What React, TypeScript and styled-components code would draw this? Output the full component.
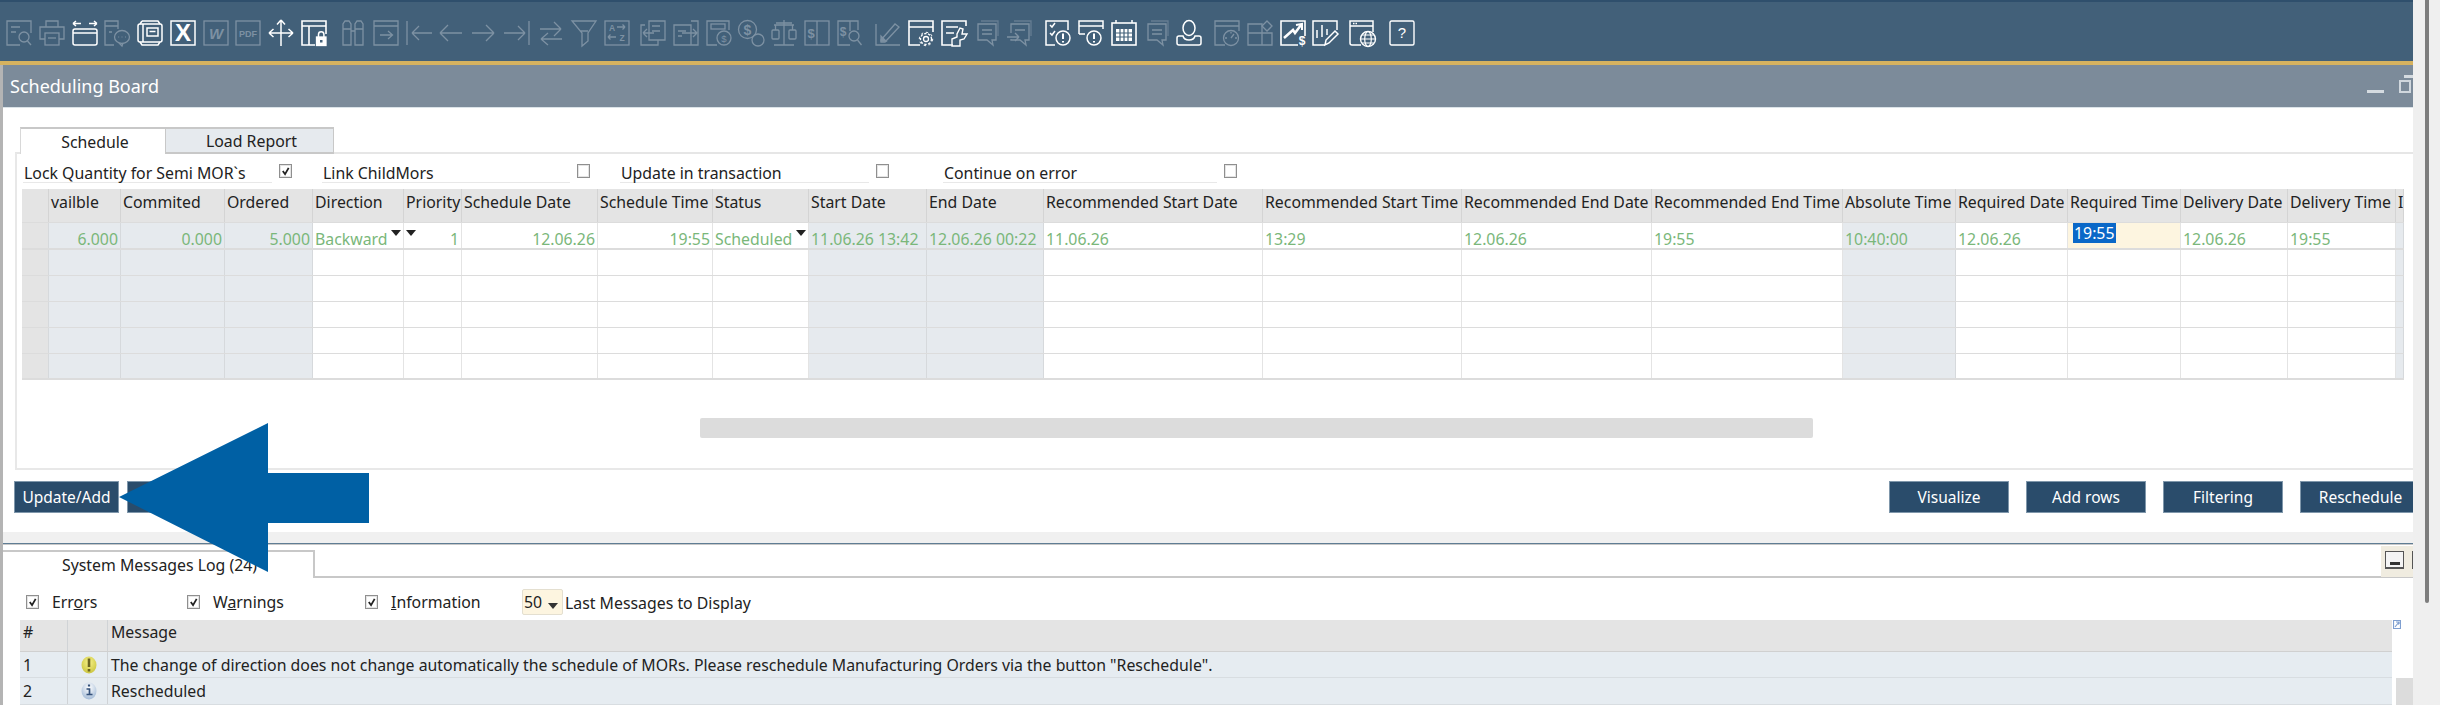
import React from "react";
import styled, { createGlobalStyle } from "styled-components";

const FONT = `"Noto Sans", "Liberation Sans", sans-serif`;

const GlobalStyle = createGlobalStyle`
  html, body {
    margin: 0;
    padding: 0;
    background: #fff;
  }
  * {
    box-sizing: border-box;
  }
`;

type Column = {
  name: string;
  width: number;
  right?: boolean;
  readOnly?: boolean;
  value?: string;
  caret?: "left" | "right";
  selected?: boolean;
};

const COLUMNS: Column[] = [
  { name: "", width: 27 },
  { name: "vailble", width: 72, right: true, readOnly: true, value: "6.000" },
  { name: "Commited", width: 104, right: true, readOnly: true, value: "0.000" },
  { name: "Ordered", width: 88, right: true, readOnly: true, value: "5.000" },
  { name: "Direction", width: 91, value: "Backward", caret: "right" },
  { name: "Priority", width: 58, right: true, value: "1", caret: "left" },
  { name: "Schedule Date", width: 136, right: true, value: "12.06.26" },
  { name: "Schedule Time", width: 115, right: true, value: "19:55" },
  { name: "Status", width: 96, value: "Scheduled", caret: "right" },
  { name: "Start Date", width: 118, readOnly: true, value: "11.06.26 13:42" },
  { name: "End Date", width: 117, readOnly: true, value: "12.06.26 00:22" },
  { name: "Recommended Start Date", width: 219, value: "11.06.26" },
  { name: "Recommended Start Time", width: 199, value: "13:29" },
  { name: "Recommended End Date", width: 190, value: "12.06.26" },
  { name: "Recommended End Time", width: 191, value: "19:55" },
  { name: "Absolute Time", width: 113, readOnly: true, value: "10:40:00" },
  { name: "Required Date", width: 112, value: "12.06.26" },
  { name: "Required Time", width: 113, value: "19:55", selected: true },
  { name: "Delivery Date", width: 107, value: "12.06.26" },
  { name: "Delivery Time", width: 108, value: "19:55" },
  { name: "I", width: 8, readOnly: true },
];

const TEMPLATE = COLUMNS.map((c) => `${c.width}px`).join(" ");

const Page = styled.div`
  display: flex;
  width: 2440px;
  height: 705px;
  overflow: hidden;
  font-family: ${FONT};
  font-size: 15.85px;
  color: #222;
`;

const Main = styled.div`
  width: 2413px;
  height: 705px;
  display: flex;
  flex-direction: column;
  overflow: hidden;
`;

const Rail = styled.div`
  width: 27px;
  height: 705px;
  background: #efefef;
  padding-left: 12px;
`;

const RailThumb = styled.div`
  width: 4px;
  height: 603px;
  background: #7d7d7d;
  border-radius: 0 0 2px 2px;
`;

const Toolbar = styled.div`
  height: 65px;
  flex-shrink: 0;
  background: #426079;
  border-top: 2px solid #2f4f6c;
  border-bottom: 4px solid #d6b25f;
  padding: 18px 0 0 6px;
  display: flex;
`;

const ToolGroup = styled.div<{ $gap?: number }>`
  display: flex;
  gap: 6.75px;
  margin-left: ${(p) => p.$gap ?? 0}px;
`;

const Tool = styled.svg<{ $on?: boolean }>`
  width: 26px;
  height: 26px;
  flex-shrink: 0;
  fill: none;
  stroke: ${(p) => (p.$on ? "#ffffff" : "#7d91a3")};
  stroke-width: 1.3;
  color: ${(p) => (p.$on ? "#ffffff" : "#7d91a3")};
  overflow: visible;
  text {
    stroke: none;
    fill: currentColor;
    font-family: "Liberation Sans", sans-serif;
    text-anchor: middle;
  }
`;

const Workspace = styled.div`
  flex: 1;
  border-left: 3px solid #b4b4b4;
  display: flex;
  flex-direction: column;
  min-height: 0;
`;

const TitleBar = styled.div`
  height: 43px;
  flex-shrink: 0;
  background: #7c8b9a;
  border-bottom: 1px solid #dbe3e8;
  color: #fff;
  font-size: 18px;
  padding-left: 7px;
  display: flex;
  align-items: center;
  justify-content: space-between;
`;

const WindowButtons = styled.div`
  display: flex;
  align-items: flex-start;
  gap: 15px;
  align-self: flex-start;
  padding-top: 10px;
`;

const MinimizeGlyph = styled.span`
  display: block;
  width: 17px;
  height: 3px;
  margin-top: 15px;
  background: #d5dbe0;
`;

const RestoreGlyph = styled.span`
  display: block;
  position: relative;
  width: 12px;
  height: 13px;
  margin-top: 5px;
  margin-right: 2px;
  border: 2px solid #d0d7dd;
  &::after {
    content: "";
    position: absolute;
    left: 3px;
    top: -7px;
    width: 9px;
    height: 3px;
    background: #d5dbe0;
  }
`;

const Board = styled.section`
  padding: 19px 0 0 12px;
  flex-shrink: 0;
`;

const TabRow = styled.div`
  display: flex;
  height: 27px;
  padding-left: 5px;
  border-bottom: 2px solid #e6e6e6;
`;

const Tab = styled.div<{ $active?: boolean; $w: number }>`
  width: ${(p) => p.$w}px;
  height: 27px;
  padding-left: 4px;
  display: flex;
  align-items: center;
  justify-content: center;
  background: ${(p) => (p.$active ? "#fff" : "#e6eaee")};
  border-top: 2px solid #c8c8c8;
  border-left: ${(p) => (p.$active ? "1px solid #d8d8d8" : "none")};
  border-right: 1px solid #c8c8c8;
  border-bottom: ${(p) => (p.$active ? "none" : "2px solid #c8c8c8")};
`;

const TabPanel = styled.div`
  height: 317px;
  border-left: 2px solid #e8e8e8;
  border-bottom: 2px solid #e8e8e8;
  margin-top: -1px;
  padding-top: 11px;
`;

const Options = styled.div`
  display: flex;
  height: 25px;
  padding-left: 6px;
`;

const OptionWrap = styled.div<{ $gap?: number }>`
  display: flex;
  gap: 7px;
  margin-left: ${(p) => p.$gap ?? 0}px;
`;

const OptionLabel = styled.label<{ $w: number }>`
  width: ${(p) => p.$w}px;
  height: 19px;
  padding-left: 1px;
  line-height: 18px;
  border-bottom: 1px solid #e8e8e8;
`;

const Box = styled.span`
  width: 13px;
  height: 14px;
  flex-shrink: 0;
  border: 1px solid #8f8f8f;
  box-shadow: inset 0 0 0 1px #e4e4e4;
  background: #fff;
  display: flex;
  align-items: center;
  justify-content: center;
  svg {
    width: 9px;
    height: 9px;
    fill: none;
    stroke: #222;
    stroke-width: 2;
  }
`;

const Grid = styled.div`
  margin: 0 0 0 5px;
  width: 2382px;
`;

const GridRow = styled.div<{ $h: number; $heavy?: boolean }>`
  display: grid;
  grid-template-columns: ${TEMPLATE};
  height: ${(p) => p.$h}px;
  border-bottom: ${(p) => (p.$heavy ? 2 : 1)}px solid #dcdcdc;
`;

const HeadCell = styled.div`
  background: #e4e4e4;
  border-right: 1px solid #d4d4d4;
  padding: 0 0 0 2px;
  line-height: 26px;
  white-space: nowrap;
  overflow: hidden;
`;

const Cell = styled.div<{ $readOnly?: boolean; $rowHead?: boolean; $align?: string; $focus?: boolean }>`
  background: ${(p) =>
    p.$rowHead ? "#e4e4e4" : p.$focus ? "#fdf5e0" : p.$readOnly ? "#e6eaee" : "#fff"};
  border-right: 1px solid ${(p) => (p.$readOnly || p.$rowHead ? "#d6d9dc" : "#e4e4e4")};
  color: #7ab77a;
  padding: 0 2px;
  display: flex;
  align-items: center;
  justify-content: ${(p) => p.$align ?? "flex-start"};
  white-space: nowrap;
`;

const CellText = styled.span`
  line-height: 18px;
  padding-top: 7px;
`;

const Selected = styled.span`
  background: #0a68c8;
  color: #fff;
  height: 20px;
  line-height: 20px;
  margin: 0 0 5px 3px;
  padding: 0 1px;
`;

const Caret = styled.span`
  width: 0;
  height: 0;
  flex-shrink: 0;
  margin-bottom: 6px;
  border-left: 5px solid transparent;
  border-right: 5px solid transparent;
  border-top: 6px solid #222;
`;

const ScrollTrack = styled.div`
  height: 20px;
  margin: 38px 0 0 683px;
  width: 1113px;
  background: #dcdcdc;
  border-radius: 2px;
`;

const Actions = styled.div`
  display: flex;
  justify-content: space-between;
  padding: 11px 0 0 11px;
  height: 62px;
  flex-shrink: 0;
`;

const ActionGroup = styled.div<{ $gap: number; $overhang?: number }>`
  display: flex;
  gap: ${(p) => p.$gap}px;
  margin-right: ${(p) => -(p.$overhang ?? 0)}px;
`;

const ActionButton = styled.button<{ $w: number }>`
  width: ${(p) => p.$w}px;
  height: 32px;
  flex-shrink: 0;
  border: 1px solid #7f97ab;
  background: #2a4c6b;
  color: #fff;
  font: inherit;
  font-size: 15.5px;
  padding: 0;
`;

const Splitter = styled.div`
  height: 12px;
  flex-shrink: 0;
  background: #f0f0f0;
  border-bottom: 1px solid #5f7d94;
  box-shadow: 0 1px 0 #c8c8c8;
`;

const LogBar = styled.div`
  height: 34px;
  flex-shrink: 0;
  display: flex;
  align-items: flex-end;
  justify-content: space-between;
  border-bottom: 2px solid #c8c8c8;
`;

const LogTab = styled.div`
  width: 312px;
  height: 28px;
  margin-bottom: -2px;
  background: #fff;
  border-top: 2px solid #c8c8c8;
  border-right: 2px solid #c8c8c8;
  padding-left: 59px;
  line-height: 26px;
  white-space: nowrap;
`;

const LogControls = styled.div`
  width: 32px;
  height: 31px;
  margin-bottom: -1px;
  background: #f0ece0;
  display: flex;
  padding: 5px 0 0 4px;
  gap: 8px;
  overflow: hidden;
`;

const LogGlyph = styled.span`
  width: 19px;
  height: 18px;
  flex-shrink: 0;
  border: 1px solid #555;
  border-bottom-width: 2px;
  background: #f4f4f4;
  display: flex;
  align-items: flex-end;
  justify-content: center;
  padding-bottom: 2px;
  &::after {
    content: "";
    width: 10px;
    height: 3px;
    background: #333;
  }
`;

const LogOptions = styled.div`
  height: 42px;
  flex-shrink: 0;
  padding: 6px 0 0 23px;
  display: flex;
  align-items: center;
`;

const LogCheck = styled.div<{ $w: number }>`
  width: ${(p) => p.$w}px;
  display: flex;
  align-items: center;
  gap: 13px;
`;

const Mnemonic = styled.span`
  text-decoration: underline;
`;

const Dropdown = styled.div`
  width: 41px;
  height: 26px;
  margin-left: -3px;
  background: #fdf5e0;
  border: 1px solid #e4dfd0;
  border-radius: 2px;
  padding-left: 1px;
  display: flex;
  align-items: center;
  gap: 6px;
`;

const DropCaret = styled.span`
  width: 0;
  height: 0;
  margin-top: 8px;
  border-left: 5px solid transparent;
  border-right: 5px solid transparent;
  border-top: 6px solid #333;
`;

const DropHint = styled.span`
  margin-left: 2px;
  padding-top: 2px;
`;

const LogGridWrap = styled.div`
  display: flex;
  padding-left: 17px;
`;

const LogGrid = styled.div`
  width: 2372px;
  flex-shrink: 0;
`;

const LogRow = styled.div<{ $head?: boolean; $h: number }>`
  display: grid;
  grid-template-columns: 48px 40px 1fr;
  height: ${(p) => p.$h}px;
  background: ${(p) => (p.$head ? "#e4e4e4" : "#e6ecf1")};
  border-bottom: 1px solid ${(p) => (p.$head ? "#d0d0d0" : "#d8dde1")};
`;

const LogCell = styled.div<{ $head?: boolean; $center?: boolean }>`
  border-right: 1px solid #d0d3d6;
  padding-left: 3px;
  display: flex;
  align-items: ${(p) => (p.$head ? "flex-start" : "center")};
  justify-content: ${(p) => (p.$center ? "center" : "flex-start")};
  line-height: 24px;
  white-space: nowrap;
  &:last-child {
    border-right: none;
  }
`;

const LogSide = styled.div`
  width: 21px;
  flex-shrink: 0;
  padding-left: 1px;
`;

const ExpandGlyph = styled.svg`
  display: block;
  width: 8px;
  height: 9px;
  fill: none;
  stroke: #7f9fd0;
  stroke-width: 1.2;
`;

const LogScroll = styled.div`
  width: 17px;
  height: 27px;
  margin: 49px 0 0 3px;
  background: #dcdcdc;
`;

const StatusIcon = styled.svg`
  width: 16px;
  height: 18px;
`;

const PointerArrow = styled.svg`
  position: absolute;
  left: 119px;
  top: 423px;
  width: 250px;
  height: 149px;
`;

const Stage = styled.div`
  position: relative;
  width: 2440px;
  height: 705px;
`;

const Check = () => (
  <svg viewBox="0 0 10 10">
    <path d="M2 4.5 4.5 8 8.5 1" />
  </svg>
);

const T = ({ on, children }: { on?: boolean; children: React.ReactNode }) => (
  <Tool $on={on} viewBox="0 0 26 26">
    {children}
  </Tool>
);

const Chat = () => (
  <>
    <path d="M8 1h17v15" opacity=".6" />
    <path d="M5 4h18v16h-4l1 5-6-5H5z" />
    <path d="M9 10h10M9 14h10" />
  </>
);

const Toolbox = () => (
  <Toolbar>
    <ToolGroup>
      <T>
        <path d="M14 25H1V1h24v12M5 7h9M5 12h5" />
        <circle cx="18" cy="17" r="5" />
        <path d="m21.5 21 3.5 4" />
      </T>
      <T>
        <path d="M7 7V1h12v6M6 19H1V7h24v12h-5" />
        <rect x="6" y="13" width="14" height="12" />
        <path d="M9 18h8" />
      </T>
      <T on>
        <path d="M1 3.5h8M1 3.5l3-2.5M1 3.5 4 6M17 3.5h8M25 3.5 22 1M25 3.5 22 6" strokeWidth="1.5" />
        <rect x="1" y="9" width="24" height="16" rx="2" strokeWidth="1.5" />
        <path d="M1 13h24" strokeWidth="1.5" />
      </T>
      <T>
        <path d="M10 25H1V1h13v8M1 6h13M5 12h3" />
        <ellipse cx="18" cy="17" rx="7.5" ry="6.5" />
        <path d="m15 23 3 3 1-3" />
        <path d="M14.5 17h.6M17.7 17h.6M21 17h.6" strokeWidth="1.6" />
      </T>
      <T on>
        <rect x="1" y="4" width="24" height="18" rx="2" strokeWidth="1.5" />
        <path d="M5 1h16l2 3M3 4l2-3M3 22l2 3h16l2-3M6 4v18" strokeWidth="1.5" />
        <rect x="10" y="8" width="11" height="8" strokeWidth="1.5" />
        <path d="M12.5 11.5h6" strokeWidth="1.5" />
      </T>
      <T on>
        <rect x="1" y="1" width="24" height="24" strokeWidth="1.5" />
        <text x="13" y="21" fontSize="24" fontWeight="700">
          X
        </text>
      </T>
      <T>
        <rect x="1" y="1" width="24" height="24" />
        <text x="13" y="18.5" fontSize="15" fontWeight="700" fontStyle="italic">
          W
        </text>
      </T>
      <T>
        <rect x="1" y="1" width="24" height="24" />
        <text x="13" y="16.5" fontSize="9" fontWeight="700">
          PDF
        </text>
      </T>
      <T on>
        <path d="M13 0v26M1 13h24M13 0 9 4.5M13 0l4 4.5M1 13l4.5-4M1 13l4.5 4M25 13l-4.5-4M25 13l-4.5 4" strokeWidth="1.5" />
      </T>
      <T on>
        <path d="M14 25H1V1h24v13M1 6h24M8 6v19" strokeWidth="1.6" />
        <rect x="15.5" y="17" width="9.5" height="8.5" fill="#fff" />
        <path d="M17.5 17v-2.5a2.7 2.7 0 0 1 5.4 0V17" strokeWidth="1.5" />
        <rect x="19" y="20" width="2.5" height="2.5" fill="#426079" stroke="none" />
      </T>
    </ToolGroup>
    <ToolGroup $gap={13.25}>
      <T>
        <path d="M3 25V4l2-3h4l2 3v21zM15 25V4l2-3h4l2 3v21zM11 11h4M3 9h8M15 9h8" />
      </T>
      <T>
        <path d="M1 1h24v24H1zM1 6h24M7 15h12M15 11l4.5 4-4.5 4" />
      </T>
      <T>
        <path d="M1 1v24M6 13h20M6 13l7-7M6 13l7 7" />
      </T>
      <T>
        <path d="M2 13h22M2 13l8-8M2 13l8 8" />
      </T>
      <T>
        <path d="M1 13h22M23 13l-8-8M23 13l-8 8" />
      </T>
      <T>
        <path d="M0 13h21M21 13l-7-7M21 13l-7 7M25 1v24" />
      </T>
    </ToolGroup>
    <ToolGroup $gap={8.25}>
      <T>
        <path d="M2 9h21M23 9l-7-7M23 9l-7 7M24 19H3M3 19l7-6M3 19l7 6" />
      </T>
      <T>
        <path d="M1 1h24L17 13v8l-6 5V13zM9 11h8" />
      </T>
      <T>
        <rect x="1" y="1" width="24" height="24" />
        <text x="8" y="11" fontSize="8.5" fontWeight="700">
          A
        </text>
        <text x="18" y="21" fontSize="8.5" fontWeight="700">
          Z
        </text>
        <path d="M13 7h8M21 7l-2.5-2.5M21 7l-2.5 2.5M12 17H4M4 17l2.5-2.5M4 17l2.5 2.5" />
      </T>
    </ToolGroup>
    <ToolGroup $gap={10.5}>
      <T>
        <path d="M9 1h16v19H9zM5 5H1v20h17v-5M12 6h8M12 11h8M14 13H3M3 13l4-4M3 13l4 4" />
      </T>
      <T>
        <path d="M1 5h17v20H1zM18 1h7v24h-7M5 11h8M5 16h4M9 13h15M24 13l-4-4M24 13l-4 4" />
      </T>
      <T>
        <path d="M11 25H1V1h22v9" />
        <rect x="5" y="4" width="14" height="5" />
        <circle cx="18" cy="18" r="7" />
        <text x="18" y="21.5" fontSize="9.5">
          $
        </text>
      </T>
      <T>
        <circle cx="9.5" cy="9.5" r="9" />
        <circle cx="20" cy="20" r="6" />
        <text x="9.5" y="14.5" fontSize="14" fontWeight="700">
          $
        </text>
      </T>
      <T>
        <path d="M13 0v25M3 25h20M3 5h20M5 3h16" />
        <rect x="1" y="10" width="7" height="9" rx="1" />
        <rect x="18" y="10" width="7" height="9" rx="1" />
        <path d="M4.5 5v5M21.5 5v5" />
      </T>
      <T>
        <rect x="1" y="1" width="24" height="24" />
        <path d="M13 1v24" />
        <text x="7" y="18" fontSize="13" fontWeight="700">
          $
        </text>
      </T>
      <T>
        <path d="M13 25H1V1h20v9M13 1v10" />
        <text x="6" y="16" fontSize="12" fontWeight="700">
          $
        </text>
        <circle cx="17" cy="16" r="5" />
        <path d="m20.5 20 4 5" />
      </T>
    </ToolGroup>
    <ToolGroup $gap={12.5}>
      <T>
        <path d="M1 4v21h24" />
        <path d="M6 20 20 4l4 3L10 22H6z" />
        <path d="M6 21v-5l5 5z" fill="#7d91a3" />
      </T>
      <T on>
        <path d="M12 25H1V1h24v11M1 7h24" strokeWidth="1.6" />
        <circle cx="18" cy="19" r="2.5" strokeWidth="1.3" />
        <circle cx="18" cy="19" r="5.5" strokeWidth="1.3" strokeDasharray="2.4 1.5" />
        <circle cx="18" cy="19" r="6.7" strokeWidth="1" strokeDasharray="2.4 2.8" />
      </T>
      <T on>
        <path d="M12 25H1V1h24v5M5 7h12M5 13h8" strokeWidth="1.6" />
        <path d="M11 26v-7l5-2v-3l3-6 3 1-1 5h5l-3 5-4 1v6z" strokeWidth="1.4" />
      </T>
      <T>
        <Chat />
      </T>
      <T>
        <path d="M8 1h17v15" opacity=".6" />
        <path d="M5 13V4h18v16h-4l1 5-6-5H5v-1" />
        <path d="M9 10h10M1 17h12M13 17l-4-4M13 17l-4 4" />
      </T>
    </ToolGroup>
    <ToolGroup $gap={13}>
      <T on>
        <path d="M10 25H1V1h22v9" strokeWidth="1.5" />
        <path d="m5 5 2 2 3-4M5 13l2 2 3-4" strokeWidth="1.5" />
        <circle cx="18" cy="18" r="7" strokeWidth="1.5" />
        <path d="M18 13.5V19M18 21v1.5" strokeWidth="2" />
      </T>
      <T on>
        <path d="M1 14V1h24v8M1 6h24M1 14h6" strokeWidth="1.5" />
        <circle cx="16" cy="18" r="7" strokeWidth="1.5" />
        <path d="M16 13.5V19M16 21v1.5" strokeWidth="2" />
      </T>
      <T on>
        <rect x="1" y="3" width="24" height="22" strokeWidth="1.6" />
        <path d="M5 0v3M21 0v3" strokeWidth="1.5" />
        <rect x="5" y="9" width="16" height="12" fill="#fff" stroke="none" />
        <path d="M5 13h16M5 17h16M9 9v12M13 9v12M17 9v12" stroke="#426079" strokeWidth="1.2" />
      </T>
      <T>
        <Chat />
      </T>
      <T on>
        <ellipse cx="13" cy="8" rx="6" ry="7.5" strokeWidth="1.5" />
        <path d="M7 16H3q-2 0-2 2v5q0 2 2 2h20q2 0 2-2v-5q0-2-2-2h-4q-1 4-6 4t-6-4z" strokeWidth="1.5" />
      </T>
    </ToolGroup>
    <ToolGroup $gap={12}>
      <T>
        <path d="M11 25H1V1h24v10M1 6h24" />
        <circle cx="17" cy="18" r="7.5" />
        <path d="m17 18 3-4M11 18h2M21 18h2M17 12v1.5" />
      </T>
      <T>
        <path d="M1 4h14v21H1zM15 13h10v12H15zM1 13h14" />
        <path d="M20 1l5 5-5 5-5-5z" />
      </T>
      <T on>
        <path d="M18 25H1V1h24v15" strokeWidth="1.6" />
        <path d="m4 18 9-8 2 3 6-8" strokeWidth="2.5" />
        <path d="m16 5 6-1v6" strokeWidth="2" />
        <text x="22" y="25" fontSize="12" fontWeight="700">
          $
        </text>
      </T>
      <T on>
        <path d="M13 25H1V1h24v9" strokeWidth="1.5" />
        <path d="M5 10v8M10 5v12M15 9v6" strokeWidth="1.5" />
        <path d="m13 25 1-5L23 11l3 3-9 9z" strokeWidth="1.5" />
      </T>
    </ToolGroup>
    <ToolGroup $gap={11}>
      <T on>
        <path d="M12 25H3q-2 0-2-2V1h23v11M1 6h23" strokeWidth="1.5" />
        <path d="M4 3.5h5" strokeWidth="1.5" strokeDasharray="1.5 1" />
        <circle cx="19" cy="19" r="7.5" strokeWidth="1.4" />
        <ellipse cx="19" cy="19" rx="3.3" ry="7.5" strokeWidth="1.2" />
        <path d="M11.5 19h15M13 15h12M13 23h12" strokeWidth="1.2" />
      </T>
    </ToolGroup>
    <ToolGroup $gap={14}>
      <T on>
        <rect x="1" y="1" width="24" height="24" rx="1.5" strokeWidth="1.4" />
        <text x="13" y="18" fontSize="15">
          ?
        </text>
      </T>
    </ToolGroup>
  </Toolbar>
);

const Option = ({ label, w, checked, gap }: { label: string; w: number; checked?: boolean; gap?: number }) => (
  <OptionWrap $gap={gap}>
    <OptionLabel $w={w}>{label}</OptionLabel>
    <Box>{checked && <Check />}</Box>
  </OptionWrap>
);

const cellAlign = (c: Column) => {
  if (c.caret) return "space-between";
  return c.right ? "flex-end" : "flex-start";
};

const ScheduleGrid = () => (
  <Grid>
    <GridRow $h={34}>
      {COLUMNS.map((c, i) => (
        <HeadCell key={i}>{c.name}</HeadCell>
      ))}
    </GridRow>
    <GridRow $h={27} $heavy>
      {COLUMNS.map((c, i) => (
        <Cell key={i} $rowHead={i === 0} $readOnly={c.readOnly} $focus={c.selected} $align={cellAlign(c)}>
          {c.caret === "left" && <Caret />}
          {c.selected ? <Selected>{c.value}</Selected> : c.value && <CellText>{c.value}</CellText>}
          {c.caret === "right" && <Caret />}
        </Cell>
      ))}
    </GridRow>
    {[0, 1, 2, 3, 4].map((r) => (
      <GridRow key={r} $h={26} $heavy={r === 4}>
        {COLUMNS.map((c, i) => (
          <Cell key={i} $rowHead={i === 0} $readOnly={c.readOnly} />
        ))}
      </GridRow>
    ))}
  </Grid>
);

const WarningIcon = () => (
  <StatusIcon viewBox="0 0 16 18">
    <defs>
      <radialGradient id="warnBall" cx="50%" cy="35%" r="70%">
        <stop offset="0%" stopColor="#f7f28a" />
        <stop offset="100%" stopColor="#c8c23a" />
      </radialGradient>
    </defs>
    <ellipse cx="8" cy="9" rx="7.5" ry="8.5" fill="url(#warnBall)" />
    <path d="M8 2.5V11" stroke="#6b6420" strokeWidth="2.6" />
    <path d="M8 13v2.5" stroke="#6b6420" strokeWidth="2.6" />
  </StatusIcon>
);

const InfoIcon = () => (
  <StatusIcon viewBox="0 0 16 18">
    <defs>
      <radialGradient id="infoBall" cx="50%" cy="30%" r="75%">
        <stop offset="0%" stopColor="#ffffff" />
        <stop offset="100%" stopColor="#9db6d4" />
      </radialGradient>
    </defs>
    <ellipse cx="8" cy="9" rx="7.5" ry="8.5" fill="url(#infoBall)" />
    <path d="M8 2.5v2" stroke="#33507a" strokeWidth="2.2" />
    <path d="M5.5 7h3v5.5M5.5 12.5h6" stroke="#33507a" strokeWidth="1.7" fill="none" />
  </StatusIcon>
);

export default function App() {
  return (
    <Stage>
      <GlobalStyle />
      <Page>
        <Main>
          <Toolbox />
          <Workspace>
            <TitleBar>
              Scheduling Board
              <WindowButtons>
                <MinimizeGlyph />
                <RestoreGlyph />
              </WindowButtons>
            </TitleBar>
            <Board>
              <TabRow>
                <Tab $active $w={146}>
                  Schedule
                </Tab>
                <Tab $w={168}>Load Report</Tab>
              </TabRow>
              <TabPanel>
                <Options>
                  <Option label="Lock Quantity for Semi MOR`s" w={249} checked />
                  <Option label="Link ChildMors" w={248} gap={30} />
                  <Option label="Update in transaction" w={249} gap={30} />
                  <Option label="Continue on error" w={274} gap={54} />
                </Options>
                <ScheduleGrid />
                <ScrollTrack />
              </TabPanel>
            </Board>
            <Actions>
              <ActionGroup $gap={8}>
                <ActionButton $w={105}>Update/Add</ActionButton>
                <ActionButton $w={116} />
              </ActionGroup>
              <ActionGroup $gap={17} $overhang={8}>
                <ActionButton $w={120}>Visualize</ActionButton>
                <ActionButton $w={120}>Add rows</ActionButton>
                <ActionButton $w={120}>Filtering</ActionButton>
                <ActionButton $w={121}>Reschedule</ActionButton>
              </ActionGroup>
            </Actions>
            <Splitter />
            <LogBar>
              <LogTab>System Messages Log (24)</LogTab>
              <LogControls>
                <LogGlyph />
                <LogGlyph />
              </LogControls>
            </LogBar>
            <LogOptions>
              <LogCheck $w={161}>
                <Box>
                  <Check />
                </Box>
                <span>
                  Err<Mnemonic>o</Mnemonic>rs
                </span>
              </LogCheck>
              <LogCheck $w={178}>
                <Box>
                  <Check />
                </Box>
                <span>
                  W<Mnemonic>a</Mnemonic>rnings
                </span>
              </LogCheck>
              <LogCheck $w={160}>
                <Box>
                  <Check />
                </Box>
                <span>
                  <Mnemonic>I</Mnemonic>nformation
                </span>
              </LogCheck>
              <Dropdown>
                50
                <DropCaret />
              </Dropdown>
              <DropHint>Last Messages to Display</DropHint>
            </LogOptions>
            <LogGridWrap>
              <LogGrid>
                <LogRow $head $h={32}>
                  <LogCell $head>#</LogCell>
                  <LogCell $head />
                  <LogCell $head>Message</LogCell>
                </LogRow>
                <LogRow $h={26}>
                  <LogCell>1</LogCell>
                  <LogCell $center>
                    <WarningIcon />
                  </LogCell>
                  <LogCell>
                    The change of direction does not change automatically the schedule of MORs. Please reschedule
                    Manufacturing Orders via the button "Reschedule".
                  </LogCell>
                </LogRow>
                <LogRow $h={27}>
                  <LogCell>2</LogCell>
                  <LogCell $center>
                    <InfoIcon />
                  </LogCell>
                  <LogCell>Rescheduled</LogCell>
                </LogRow>
              </LogGrid>
              <LogSide>
                <ExpandGlyph viewBox="0 0 8 9">
                  <path d="M.5.5h7v8h-7zM2 7l4-5M3 2h3v3" />
                </ExpandGlyph>
                <LogScroll />
              </LogSide>
            </LogGridWrap>
          </Workspace>
        </Main>
        <Rail>
          <RailThumb />
        </Rail>
      </Page>
      <PointerArrow viewBox="0 0 250 149">
        <path d="M0 74 149 0v50h101v50H149v49z" fill="#0060a4" />
      </PointerArrow>
    </Stage>
  );
}
